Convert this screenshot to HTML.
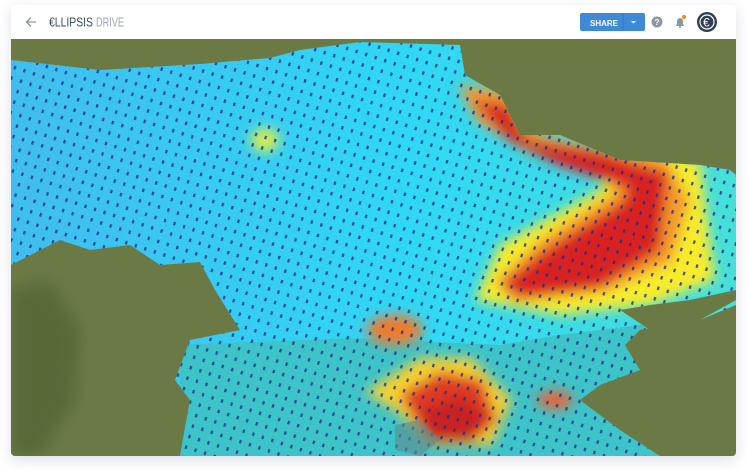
<!DOCTYPE html>
<html><head><meta charset="utf-8"><style>
html,body{margin:0;width:747px;height:474px;background:#fff;overflow:hidden;font-family:"Liberation Sans",sans-serif}
.card{position:absolute;left:11px;top:5px;width:725px;height:451px;background:#fff;border-radius:4px;box-shadow:0 4px 14px rgba(60,80,120,.18);overflow:hidden}
.hdr{position:absolute;left:0;top:0;width:725px;height:34px;background:#fff}
.map{position:absolute;left:0;top:34px;display:block}
</style></head><body>
<div class="card">
<div class="hdr">
<svg width="725" height="34" style="position:absolute;left:0;top:0">
<path d="M25 17h-9M20 12.5l-4.5 4.5 4.5 4.5" stroke="#8a94a6" stroke-width="1.3" fill="none"/>
<text x="38" y="21.5" font-size="13" fill="#3d4d66" textLength="44" lengthAdjust="spacingAndGlyphs">€LLIPSIS</text>
<text x="85" y="21.5" font-size="13" fill="#9aa3b2" textLength="28" lengthAdjust="spacingAndGlyphs">DRIVE</text>
<rect x="569" y="8" width="65" height="18" rx="2" fill="#3d8ad6"/>
<line x1="612" y1="8" x2="612" y2="26" stroke="#2f74bd"/>
<text x="579" y="21" font-size="8" font-weight="bold" fill="#fff">SHARE</text>
<path d="M620 16h5l-2.5 2.5z" fill="#fff"/>
<circle cx="646" cy="17" r="5.5" fill="#8e96a2"/>
<text x="643.5" y="20" font-size="8" font-weight="bold" fill="#fff">?</text>
<path d="M665 21h8l-1-2v-3a3 3 0 0 0-6 0v3z" fill="#8e96a2"/><circle cx="669" cy="22" r="1" fill="#8e96a2"/>
<circle cx="673" cy="12" r="2" fill="#f08a2a"/>
<circle cx="696" cy="17" r="10" fill="#2d3e55"/>
<circle cx="696" cy="17" r="7" fill="none" stroke="#fff" stroke-width="1.2"/>
<text x="692" y="21.5" font-size="12" fill="#fff">€</text>
</svg>
</div>
<svg class="map" width="725" height="417" viewBox="11 39 725 417">
<defs>
<filter id="b" x="-20%" y="-20%" width="140%" height="140%"><feGaussianBlur stdDeviation="6"/></filter>
<filter id="s"><feGaussianBlur stdDeviation="8"/></filter>
<pattern id="d" width="10" height="11" patternUnits="userSpaceOnUse" patternTransform="rotate(18)"><rect x="4" y="3" width="2.2" height="3.5" fill="#1f2a8a"/></pattern>
<linearGradient id="cy" x1="0" x2="1"><stop offset="0" stop-color="#40bdf0"/><stop offset=".55" stop-color="#2fd8f4"/><stop offset="1" stop-color="#45e0d8"/></linearGradient>
<clipPath id="cl"><path d="M11 60L100 70 200 64 270 58 300 50 360 42 460 45 465 75 500 95 520 135 560 135 620 160 700 165 730 170 736 175 736 290 690 300 650 305 620 310 650 330 700 320 736 300 736 456 180 456 190 400 175 380 190 340 240 330 215 290 200 262 160 265 130 245 90 250 60 240 11 265Z"/></clipPath>
</defs>
<rect x="11" y="39" width="725" height="417" fill="#6b7a45"/>
<path d="M11 290 L50 280 80 330 75 400 40 456 11 456Z" fill="#566a38" filter="url(#s)"/>
<g clip-path="url(#cl)">
<rect x="11" y="39" width="725" height="417" fill="url(#cy)"/>
<path d="M180 345 L350 338 500 345 560 335 640 325 736 320 736 456 180 456Z" fill="#3cc4c8"/>
<g filter="url(#b)">
<ellipse cx="265" cy="140" rx="14" ry="12" fill="#d8ef4a"/>
<path d="M475 300 L500 245 600 190 630 145 700 160 715 280 650 305 560 315Z" fill="#f7ec2a"/>
<path d="M458 85 L520 92 540 135 600 148 665 158 690 200 672 262 605 292 515 302 495 282 540 240 615 192 598 172 528 152 478 122Z" fill="#f59a2a"/>
<path d="M500 285 L545 250 622 202 640 165 668 172 660 250 600 288 522 298Z" fill="#d82424"/>
<path d="M472 100 L508 105 528 140 600 152 648 167 628 188 558 165 508 140Z" fill="#d82424"/>
<ellipse cx="395" cy="330" rx="28" ry="15" fill="#f07a2a"/>
<path d="M365 392 L420 358 472 358 512 400 492 445 430 445 398 412Z" fill="#f5d030"/>
<path d="M400 395 L440 372 482 380 497 420 472 442 428 442Z" fill="#e03a24"/>
<path d="M420 410 L460 395 490 420 470 442 430 442Z" fill="#c82020"/>
<ellipse cx="555" cy="400" rx="18" ry="9" fill="#f06030"/>
</g>
<rect x="11" y="39" width="725" height="417" fill="url(#d)" opacity=".8"/>
</g>
<path d="M640 330L700 320 736 305 736 456 660 456 620 430 580 400 600 385 640 370 625 345Z" fill="#6b7a45"/>
<path d="M395 425 L420 420 440 440 420 456 395 450Z" fill="#5f8a90" opacity=".6"/>
</svg>
</div>
</body></html>
